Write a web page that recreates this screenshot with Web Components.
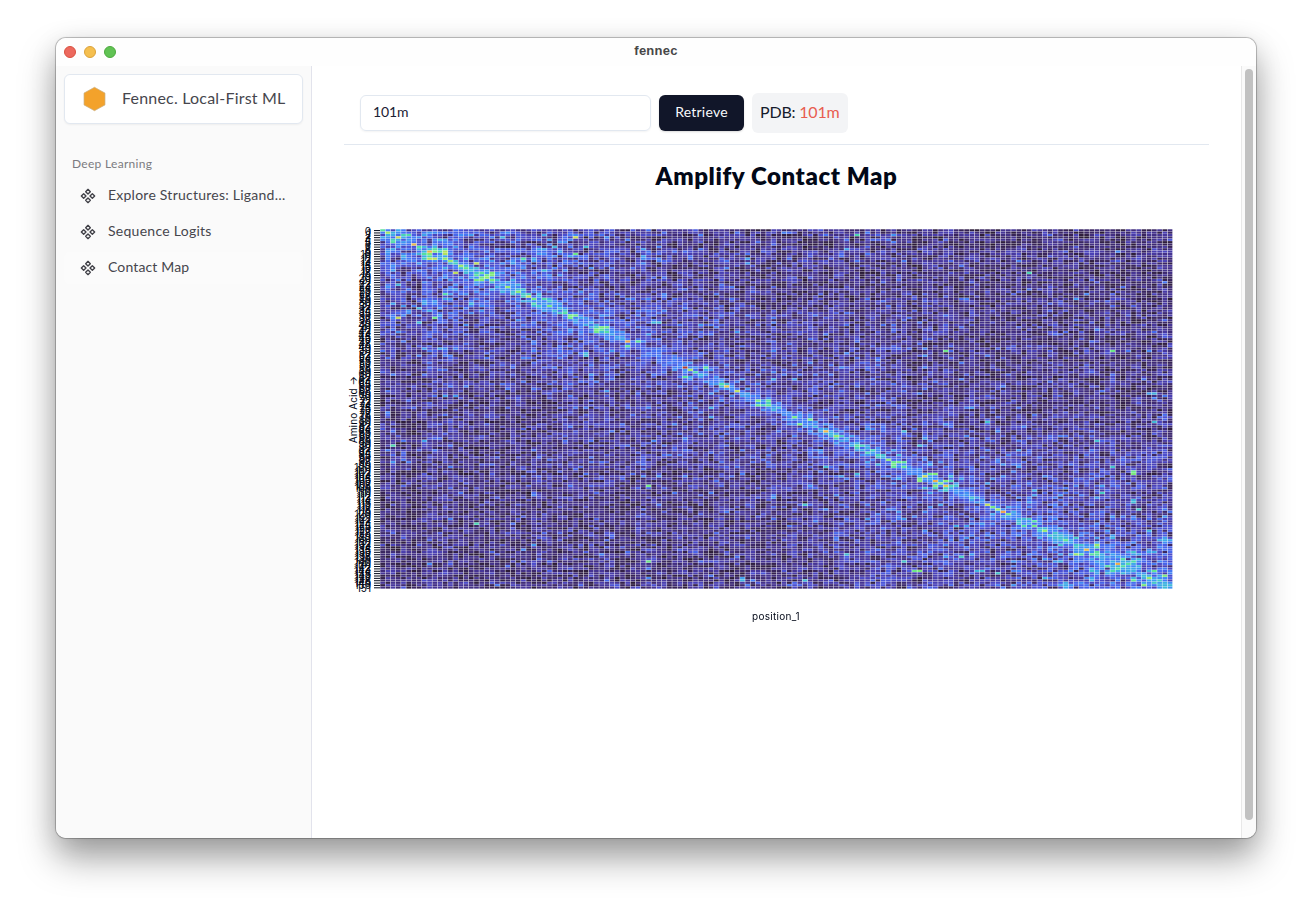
<!DOCTYPE html>
<html lang="en">
<head>
<meta charset="utf-8">
<title>fennec</title>
<style>
html,body{margin:0;height:100%;background:#fff;overflow:hidden}
body{font-family:Lato,"Open Sans",sans-serif;color:#020817;padding:38px 56px 0;box-sizing:border-box}
</style>
</head>
<body>
<app-window title="fennec">
  <app-sidebar slot="sidebar">
    <brand-card slot="brand">Fennec. Local-First ML</brand-card>
    <nav-group label="Deep Learning">
      <nav-item style="--ls:.24px">Explore Structures: Ligand…</nav-item>
      <nav-item style="--ls:.27px">Sequence Logits</nav-item>
      <nav-item style="--ls:.14px" active>Contact Map</nav-item>
    </nav-group>
  </app-sidebar>
  <query-bar value="101m"></query-bar>
  <contact-map heading="Amplify Contact Map"></contact-map>
</app-window>
<script>
const define = (name, html, init) => {
  const t = document.createElement('template');
  t.innerHTML = html;
  customElements.define(name, class extends HTMLElement {
    connectedCallback() {
      if (this.shadowRoot) return;
      const root = this.attachShadow({mode: 'open'});
      root.append(t.content.cloneNode(true));
      if (init) init(this, root);
    }
  });
};

define('app-window', `
<style>
:host{display:flex;flex-direction:column;width:1200px;height:800px;border-radius:10px;background:#fff;overflow:hidden;
box-shadow:0 0 0 1px rgba(0,0,0,.2),0 0 3px rgba(0,0,0,.12),0 20px 36px rgba(0,0,0,.36),0 6px 28px rgba(0,0,0,.1)}
header{height:28px;flex:none;display:grid;grid-template-columns:1fr auto 1fr;align-items:center;background:#fefefe}
.lights{display:flex;gap:8px;padding-left:8px}
.lights i{width:12px;height:12px;box-sizing:border-box;border-radius:50%;border:1px solid}
b{font:700 13px/26px "Liberation Sans",sans-serif;color:#474747;letter-spacing:.25px;padding-bottom:2px}
.body{flex:1;display:flex;min-height:0}
main{flex:1;min-width:0;padding:16px 32px}
.scroll{width:14px;border-left:1px solid #e8e8e8;background:#fafafa;box-sizing:content-box;padding:3px 0 18px;display:flex;justify-content:center}
.scroll i{width:8px;border-radius:4px;background:#c1c1c1}
</style>
<header><div class="lights"><i style="background:#ec695e;border-color:#d9503f"></i><i style="background:#f5bf4f;border-color:#dba23a"></i><i style="background:#61c354;border-color:#4daa3e"></i></div><b></b><span></span></header>
<div class="body"><slot name="sidebar"></slot><main><slot></slot></main><div class="scroll"><i></i></div></div>`,
(el, r) => r.querySelector('b').textContent = el.getAttribute('title'));

define('app-sidebar', `
<style>
:host{display:flex;flex-direction:column;width:256px;box-sizing:border-box;flex:none;background:#fafafa;border-right:1px solid #e2e3ec;padding:8px;gap:32px;color:#46464d}
</style><slot name="brand"></slot><slot></slot>`);

define('brand-card', `
<style>
:host{display:flex;align-items:center;box-sizing:border-box;width:239px;height:50px;padding-left:17.5px;gap:16.5px;background:#fff;border:1px solid #e2e8f0;border-radius:6px;box-shadow:0 1px 2px rgba(0,0,0,.05);font-size:16px;letter-spacing:.2px;white-space:nowrap}
span{padding-bottom:3px}
</style>
<svg width="23" height="26" viewBox="0 0 23 26"><path d="M11.5 1.3 22 7.1v11.8l-10.5 5.8L1 18.9V7.1z" fill="#f3a22b" stroke="#c9b286" stroke-width=".7"/></svg><span><slot></slot></span>`);

define('nav-group', `
<style>
:host{display:flex;flex-direction:column}
h2{margin:0;height:24px;padding-left:8px;font:400 12px/15px Lato,sans-serif;letter-spacing:.3px;color:#7b7b80}
div{display:flex;flex-direction:column;gap:4px}
</style><h2></h2><div><slot></slot></div>`,
(el, r) => r.querySelector('h2').textContent = el.getAttribute('label'));

define('nav-item', `
<style>
:host{display:flex;align-items:center;gap:12px;width:239px;height:32px;box-sizing:border-box;padding-left:16px;border-radius:6px;font-size:14px;letter-spacing:var(--ls);white-space:nowrap}
:host([active]){background:#fbfbfb}
span{padding-bottom:3px}
</style>
<svg width="16" height="16" viewBox="0 0 24 24" fill="none" stroke="#3f3f46" stroke-width="2" stroke-linecap="round" stroke-linejoin="round"><path d="M5.5 8.5 9 12l-3.5 3.5L2 12l3.5-3.5ZM12 2l3.5 3.5L12 9 8.5 5.5 12 2ZM18.5 8.5 22 12l-3.5 3.5L15 12l3.5-3.5ZM12 15l3.5 3.5L12 22l-3.5-3.5L12 15Z"/></svg><span><slot></slot></span>`);

define('query-bar', `
<style>
:host{display:flex;align-items:center;gap:8px;height:62px;padding:0 16px;border-bottom:1px solid #e2e8f0}
.field{box-sizing:border-box;width:291px;height:36px;border:1px solid #e2e8f0;border-radius:6px;padding:0 12px;font-size:14px;line-height:32px;letter-spacing:-.1px;color:#1b2133;box-shadow:0 1px 2px rgba(0,0,0,.05)}
button{width:85px;height:36px;border:0;border-radius:6px;background:#111629;color:#f8fafc;font:400 14px/34px Lato,sans-serif;letter-spacing:.24px;padding:0 0 2px;box-shadow:0 1px 2px rgba(0,0,0,.15)}
.tag{box-sizing:border-box;width:96px;height:40px;border-radius:6px;background:#f3f4f6;padding-left:8px;font-size:16px;line-height:38px;letter-spacing:-.2px;white-space:nowrap;color:#151b2b}
em{font-style:normal;color:#e85c50}
</style>
<div class="field"></div><button>Retrieve</button><div class="tag">PDB: <em></em></div>`,
(el, r) => { for (const n of r.querySelectorAll('.field,em')) n.textContent = el.getAttribute('value'); });

const N = 152;
// [column, row, value]; mirrored across the diagonal
const PEAKS = [[0,0,.38],[1,1,.5],[3,3,.57],[6,6,.66],[7,7,.36],[9,9,.68],[10,9,.46],[9,12,.54],[10,12,.54],[12,12,.48],[13,13,.5],[14,18,.56],[15,15,.5],[16,16,.4],
[18,19,.38],[20,20,.48],[19,20,.42],[21,21,.45],[21,18,.45],[20,19,.42],[21,19,.46],[24,24,.48],[26,26,.46],[28,28,.54],[29,29,.42],[32,32,.43],[31,29,.34],[35,35,.36],[36,36,.44],[37,36,.42],
[43,41,.42],[41,42,.44],[42,42,.38],[43,43,.36],[47,47,.7],[49,47,.38],[58,58,.92],[59,59,.52],[62,58,.37],[60,60,.34],[66,66,.64],[65,65,.36],[68,68,.56],[72,72,.45],[74,72,.4],[74,74,.4],[79,79,.43],[80,82,.43],[85,85,.66],[87,87,.48],
[91,91,.38],[95,95,.32],[97,97,.48],[98,98,.4],[99,98,.43],[100,98,.38],[100,100,.37],[104,104,.58],[103,105,.42],[106,106,.68],[106,103,.46],[107,107,.46],[108,108,.63],[106,108,.46],[116,116,.56],[117,117,.43],[118,118,.5],[119,119,.7],[120,120,.42],
[125,125,.43],[125,123,.36],[127,127,.48],[131,131,.4],[135,135,.66],[137,133,.5],[137,134,.36],[137,136,.38],[137,137,.36],[141,141,.68],[143,141,.37],[144,140,.35],[142,142,.36],[147,147,.5],[148,144,.4],[150,146,.45],
[37,3,.57],[37,10,.42],[27,12,.35],[91,2,.34],[124,18,.33],[108,51,.42],[140,51,.42],[144,103,.45],[144,102,.42],[116,81,.28],[148,81,.26],[137,89,.27],[100,85,.26],[23,3,.24],[39,7,.26],[33,7,.24],[53,39,.25],[52,39,.25],[50,11,.2],[70,12,.2],[70,14,.19],[148,69,.24],[147,69,.2],[75,63,.22],[79,63,.2],[140,100,.28],[138,111,.3],[144,115,.26],[145,118,.28],[144,114,.24],[125,110,.22]];
// anti-diagonal bands: [column + row, from column, to column, strength]
const BANDS = [[40,20,37,.08],[48,24,40,.05],[86,43,55,.07],[104,52,64,.04],[186,93,119,.035],[240,120,148,.05],[282,141,151,.12],[262,131,140,.05],[246,128,150,.04],[217,109,130,.03],[148,80,110,.02]];

function contacts() {
  let s = 90210;
  const rnd = () => { s = s + 0x6D2B79F5 | 0; let t = Math.imul(s ^ s >>> 15, 1 | s); t = t + Math.imul(t ^ t >>> 7, 61 | t) ^ t; return ((t ^ t >>> 14) >>> 0) / 4294967296; };
  const bias = Array.from({length: N}, () => .75 + rnd() * .45);
  [9,12,37,39,43,78,100,137,144].forEach(i => bias[i] += .2);
  const m = Array.from({length: N}, () => new Float32Array(N));
  for (let r = 0; r < N; r++) for (let c = r; c < N; c++) {
    const d = c - r, sum = c + r;
    const near = Math.exp(-d / 40);
    const corner = Math.exp(-sum / 50) * .05 + Math.exp(-(302 - sum) / 65) * .05;
    const level = (.032 + .022 * near + corner * (.3 + .7 * near)) * bias[r] * bias[c];
    let v = level * (.25 + 1.4 * rnd()) + (rnd() < .14 ? level * rnd() * 1.6 : 0) + (rnd() < .02 ? .12 * rnd() : 0);
    if (d < 2) v += .06 + .11 * rnd();
    else if (d < 4) v += rnd() < .5 ? .03 + .11 * rnd() : .015;
    else if (d < 8) v += .025 * rnd();
    for (const [b, from, to, k] of BANDS) if (c >= from && c <= to && Math.abs(sum - b) < 3 && rnd() < .4) v += k * (.4 + .9 * rnd());
    m[r][c] = m[c][r] = v;
  }
  for (let i = 49; i < 58; i++) for (let j = 49; j < 58; j++) m[i][j] = Math.min(m[i][j], .1 + .06 * rnd());
  for (const [c, r, v] of PEAKS) m[r][c] = m[c][r] = v;
  return m;
}

const turbo = t => {
  t = Math.max(0, Math.min(1, t));
  // strong values are softened towards a pale slate
  const k = Math.min(.22, Math.max(0, (t - .12) * 1.5));
  const q = (v, soft) => Math.round(Math.max(0, Math.min(255, v)) * (1 - k) + soft * k);
  return `rgb(${q(34.61 + t * (1172.33 - t * (10793.56 - t * (33300.12 - t * (38394.49 - t * 14825.05)))), 170)},${
    q(23.31 + t * (557.33 + t * (1225.33 - t * (3574.96 - t * (1073.77 + t * 707.56)))), 160)},${
    q(27.2 + t * (3211.1 - t * (15327.97 - t * (27814 - t * (22569.18 - t * 6838.66)))), 190)})`;
};

define('contact-map', `
<style>
:host{display:block}
h1{margin:0;height:84px;padding-top:14px;box-sizing:border-box;text-align:center;font:800 24px/33px Lato,sans-serif;letter-spacing:.6px}
figure{margin:0;display:grid;grid-template-columns:36px 793px;grid-template-rows:360px 55px}
svg,canvas{display:block;overflow:visible}
text{font:10px Inter,sans-serif;fill:#020817}
.x{grid-column:2;text-align:center;font:10px/54px Inter,sans-serif;letter-spacing:.3px;margin-left:-1px}
</style>
<h1></h1>
<figure><svg width="36" height="360"></svg><canvas width="793" height="360"></canvas><div class="x">position_1</div></figure>`,
(el, r) => {
  r.querySelector('h1').textContent = el.getAttribute('heading');
  const H = 359.6, W = 792.6, sy = H / N, sx = W / N;
  let ticks = '', labels = '';
  for (let i = 0; i < N; i++) {
    const y = ((i + .5) * sy + .4).toFixed(2);
    ticks += `M30 ${y}h6`;
    labels += `<text x="27" y="${+y + .8}" dy=".32em" text-anchor="end">${i}</text>`;
  }
  r.querySelector('svg').innerHTML = `<path d="${ticks}" stroke="#020817" stroke-width="1"/>${labels}<text transform="translate(13.4 180.5) rotate(-90)" text-anchor="middle" letter-spacing=".1">Amino Acid →</text>`;
  const g = r.querySelector('canvas').getContext('2d'), m = contacts();
  for (let y = 0; y < N; y++) for (let x = 0; x < N; x++) {
    g.fillStyle = turbo(m[y][x]);
    g.fillRect(x * sx + .26, y * sy + .28, sx - .48, sy - .26);
  }
});
</script>
</body>
</html>
